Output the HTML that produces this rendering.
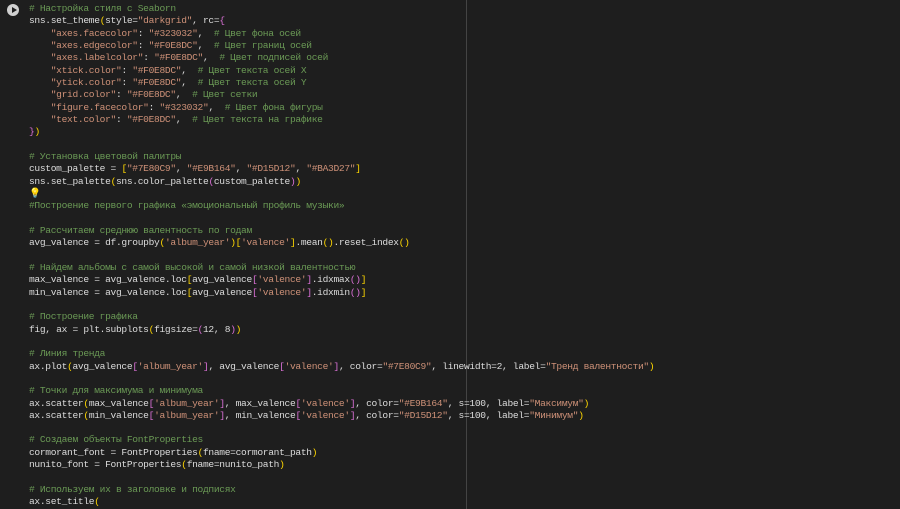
<!DOCTYPE html>
<html><head><meta charset="utf-8"><style>
html,body{margin:0;padding:0;background:#1e1e1e;width:900px;height:509px;overflow:hidden}
pre{position:absolute;left:29px;top:3px;margin:0;font-family:"Liberation Mono","DejaVu Sans Mono",monospace;font-size:9.6px;letter-spacing:-0.32px;line-height:12.33px;color:#dcdcdc;white-space:pre}
.c{color:#6a9955}.s{color:#ce9178}.y{color:#ffd700}.p{color:#da70d6}.b{color:#179fff}
.rule{position:absolute;left:466px;top:0;width:1px;height:509px;background:#444}
.run{position:absolute;left:7px;top:4px;width:12px;height:12px;border-radius:50%;background:#d0d0d0}
.run:after{content:"";position:absolute;left:4.5px;top:3px;border-left:5px solid #1e1e1e;border-top:3px solid transparent;border-bottom:3px solid transparent}
</style></head><body>
<div class="rule"></div><div class="run"></div>
<pre><span class="c"># Настройка стиля с Seaborn</span>
sns.set_theme<span class="y">(</span>style=<span class="s">"darkgrid"</span>, rc=<span class="p">{</span>
    <span class="s">"axes.facecolor"</span>: <span class="s">"#323032"</span>,  <span class="c"># Цвет фона осей</span>
    <span class="s">"axes.edgecolor"</span>: <span class="s">"#F0E8DC"</span>,  <span class="c"># Цвет границ осей</span>
    <span class="s">"axes.labelcolor"</span>: <span class="s">"#F0E8DC"</span>,  <span class="c"># Цвет подписей осей</span>
    <span class="s">"xtick.color"</span>: <span class="s">"#F0E8DC"</span>,  <span class="c"># Цвет текста осей X</span>
    <span class="s">"ytick.color"</span>: <span class="s">"#F0E8DC"</span>,  <span class="c"># Цвет текста осей Y</span>
    <span class="s">"grid.color"</span>: <span class="s">"#F0E8DC"</span>,  <span class="c"># Цвет сетки</span>
    <span class="s">"figure.facecolor"</span>: <span class="s">"#323032"</span>,  <span class="c"># Цвет фона фигуры</span>
    <span class="s">"text.color"</span>: <span class="s">"#F0E8DC"</span>,  <span class="c"># Цвет текста на графике</span>
<span class="p">}</span><span class="y">)</span>

<span class="c"># Установка цветовой палитры</span>
custom_palette = <span class="y">[</span><span class="s">"#7E80C9"</span>, <span class="s">"#E9B164"</span>, <span class="s">"#D15D12"</span>, <span class="s">"#BA3D27"</span><span class="y">]</span>
sns.set_palette<span class="y">(</span>sns.color_palette<span class="p">(</span>custom_palette<span class="p">)</span><span class="y">)</span>
<span class="y">💡</span>
<span class="c">#Построение первого графика «эмоциональный профиль музыки»</span>

<span class="c"># Рассчитаем среднюю валентность по годам</span>
avg_valence = df.groupby<span class="y">(</span><span class="s">'album_year'</span><span class="y">)[</span><span class="s">'valence'</span><span class="y">]</span>.mean<span class="y">()</span>.reset_index<span class="y">()</span>

<span class="c"># Найдем альбомы с самой высокой и самой низкой валентностью</span>
max_valence = avg_valence.loc<span class="y">[</span>avg_valence<span class="p">[</span><span class="s">'valence'</span><span class="p">]</span>.idxmax<span class="p">()</span><span class="y">]</span>
min_valence = avg_valence.loc<span class="y">[</span>avg_valence<span class="p">[</span><span class="s">'valence'</span><span class="p">]</span>.idxmin<span class="p">()</span><span class="y">]</span>

<span class="c"># Построение графика</span>
fig, ax = plt.subplots<span class="y">(</span>figsize=<span class="p">(</span>12, 8<span class="p">)</span><span class="y">)</span>

<span class="c"># Линия тренда</span>
ax.plot<span class="y">(</span>avg_valence<span class="p">[</span><span class="s">'album_year'</span><span class="p">]</span>, avg_valence<span class="p">[</span><span class="s">'valence'</span><span class="p">]</span>, color=<span class="s">"#7E80C9"</span>, linewidth=2, label=<span class="s">"Тренд валентности"</span><span class="y">)</span>

<span class="c"># Точки для максимума и минимума</span>
ax.scatter<span class="y">(</span>max_valence<span class="p">[</span><span class="s">'album_year'</span><span class="p">]</span>, max_valence<span class="p">[</span><span class="s">'valence'</span><span class="p">]</span>, color=<span class="s">"#E9B164"</span>, s=100, label=<span class="s">"Максимум"</span><span class="y">)</span>
ax.scatter<span class="y">(</span>min_valence<span class="p">[</span><span class="s">'album_year'</span><span class="p">]</span>, min_valence<span class="p">[</span><span class="s">'valence'</span><span class="p">]</span>, color=<span class="s">"#D15D12"</span>, s=100, label=<span class="s">"Минимум"</span><span class="y">)</span>

<span class="c"># Создаем объекты FontProperties</span>
cormorant_font = FontProperties<span class="y">(</span>fname=cormorant_path<span class="y">)</span>
nunito_font = FontProperties<span class="y">(</span>fname=nunito_path<span class="y">)</span>

<span class="c"># Используем их в заголовке и подписях</span>
ax.set_title<span class="y">(</span>
</pre>
</body></html>
